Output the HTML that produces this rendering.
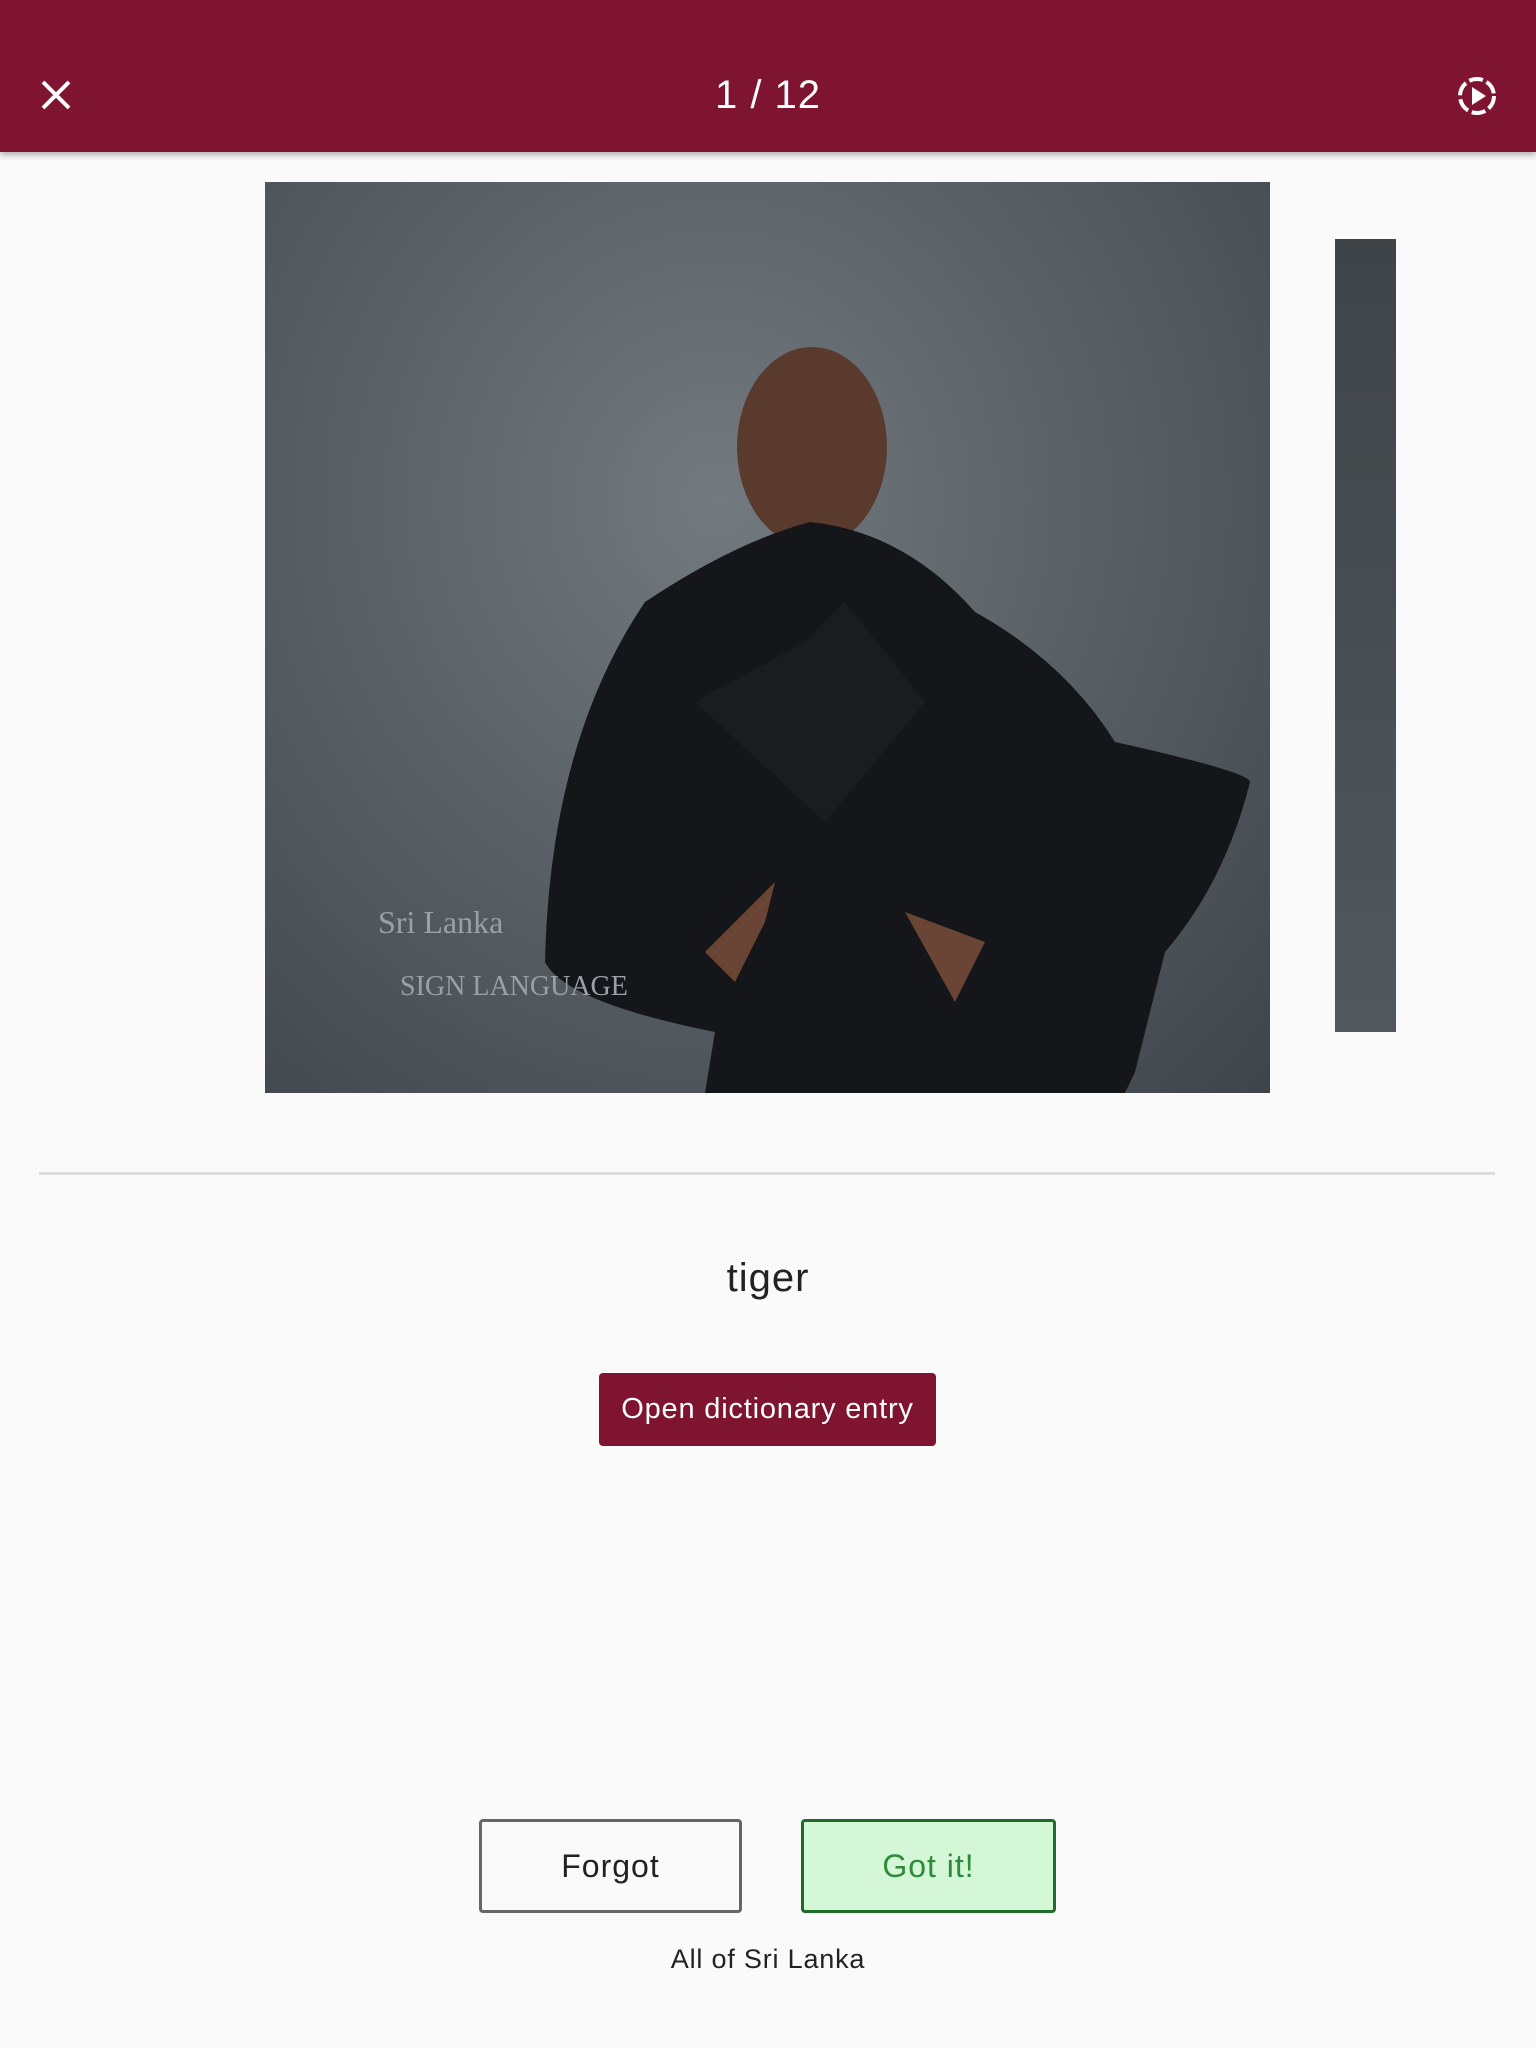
<!DOCTYPE html>
<html><head><meta charset="utf-8"><style>
body{margin:0;width:1536px;height:2048px;background:#fafafa;font-family:"Liberation Sans",sans-serif;position:relative;overflow:hidden}
.bar{position:absolute;left:0;top:0;width:1536px;height:152px;background:#7e1430;box-shadow:0 3px 6px rgba(0,0,0,.3)}
.title{position:absolute;left:0;width:1536px;top:72px;text-align:center;color:#fff;font-size:40px;line-height:46px;letter-spacing:1px}
.video{position:absolute;left:265px;top:182px;width:1005px;height:911px;background:radial-gradient(ellipse at 45% 35%,#727a80 0%,#5a6268 45%,#3e444a 100%);overflow:hidden}
.side{position:absolute;left:1335px;top:239px;width:61px;height:793px;background:linear-gradient(#3e4448,#50585e)}
.div{position:absolute;left:39px;top:1172px;width:1456px;height:3px;background:#ddd}
.tiger{position:absolute;left:0;width:1536px;top:1256px;text-align:center;font-size:40px;color:#222;letter-spacing:1px}
.btn{position:absolute;left:599px;top:1373px;width:337px;height:73px;background:#7e1430;color:#fff;border-radius:4px;font-size:29px;line-height:73px;text-align:center;letter-spacing:.8px}
.b2{position:absolute;top:1819px;height:88px;border-radius:4px;font-size:32px;line-height:88px;text-align:center;letter-spacing:1px}
.foot{position:absolute;left:0;width:1536px;top:1944px;text-align:center;font-size:27px;color:#222;letter-spacing:.8px}
</style></head><body>
<div class="bar">
<svg style="position:absolute;left:40px;top:79px" width="32" height="32" viewBox="0 0 32 32"><path d="M3 3L29 29M29 3L3 29" stroke="#fff" stroke-width="4"/></svg>
<div class="title">1 / 12</div>
<svg style="position:absolute;left:1456px;top:75px" width="42" height="42" viewBox="0 0 42 42"><circle cx="21" cy="21" r="17" fill="none" stroke="#fff" stroke-width="4" stroke-dasharray="14 4"/><path d="M16 12L30 21L16 30Z" fill="#fff"/></svg>
</div>
<div class="video">
<svg width="1005" height="911" viewBox="0 0 1005 911">
<ellipse cx="547" cy="265" rx="75" ry="100" fill="#5a3a2c"/>
<path d="M380 420Q470 360 545 340Q640 350 710 430Q800 480 850 560Q985 590 985 600Q960 700 900 770L870 890L860 911H440L450 850Q300 820 280 780Q285 560 380 420Z" fill="#141619"/>
<path d="M430 520L560 640L660 520L580 420L540 460Z" fill="#1a1c20"/>
<path d="M440 770L510 700L500 740L470 800Z M640 730L720 760L690 820Z" fill="#6a4434"/>
<text x="113" y="751" fill="#9aa0a4" font-size="32" font-family="Liberation Serif">Sri Lanka</text>
<text x="135" y="813" fill="#9aa0a4" font-size="28" font-family="Liberation Serif">SIGN LANGUAGE</text>
</svg>
</div>
<div class="side"></div>
<div class="div"></div>
<div class="tiger">tiger</div>
<div class="btn">Open dictionary entry</div>
<div class="b2" style="left:479px;width:257px;border:3px solid #666;color:#222;background:#fafafa">Forgot</div>
<div class="b2" style="left:801px;width:249px;border:3px solid #1e6b2a;color:#2e8b3a;background:#d4f7d8">Got it!</div>
<div class="foot">All of Sri Lanka</div>
</body></html>
